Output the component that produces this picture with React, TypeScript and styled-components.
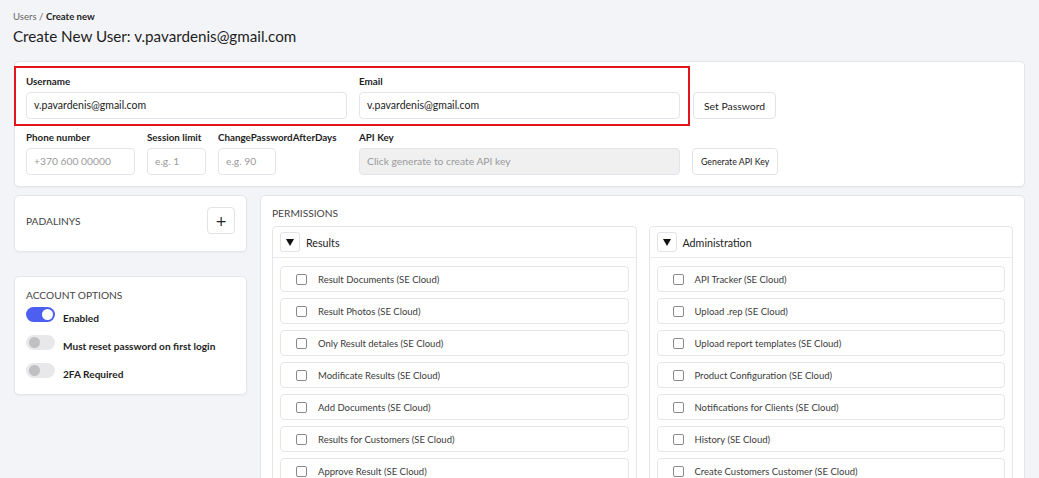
import React from "react";
import styled, { createGlobalStyle } from "styled-components";

const Global = createGlobalStyle`
  html, body { margin: 0; padding: 0; overflow: hidden; background: #f3f4f8; }
  body { font-family: Lato, "Open Sans", sans-serif; color: #222; }
  * { box-sizing: border-box; }
`;

const Page = styled.div`
  padding: 10px 14px 0 14px;
  width: 1039px;
`;

const Breadcrumb = styled.div`
  font-size: 9.6px;
  line-height: 14px;
  color: #666;
  margin-left: -1px;
  b { color: #222; font-weight: 700; }
`;

const Title = styled.h1`
  margin: 1px 0 0 -1px;
  font-size: 15.2px;
  line-height: 22px;
  font-weight: 400;
  color: #1e1e1e;
`;

const Card = styled.div`
  background: #fff;
  border: 1px solid #e4e6eb;
  border-radius: 5px;
  box-shadow: 0 1px 2px rgba(0, 0, 0, 0.04);
`;

const TopCard = styled(Card)`
  margin-top: 14px;
  padding: 4px 12px 11px 0;
`;

const Row = styled.div`
  display: flex;
  align-items: flex-end;
`;

const Highlight = styled.div`
  display: flex;
  gap: 12px;
  border: 2px solid #e3141b;
  padding: 6px 8px 5px 10px;
  margin-left: -1px;
`;

const Row2 = styled.div`
  display: flex;
  align-items: flex-end;
  gap: 12px;
  padding-left: 11px;
  margin-top: 4px;
`;

const Field = styled.div<{ $w: number }>`
  width: ${(p) => p.$w}px;
  display: flex;
  flex-direction: column;
`;

const Label = styled.label`
  font-size: 9.8px;
  font-weight: 700;
  line-height: 14px;
  color: #1e1e1e;
  white-space: nowrap;
  margin-bottom: 4px;
`;

const Input = styled.div<{ $w?: number; $placeholder?: boolean; $disabled?: boolean }>`
  width: ${(p) => (p.$w ? `${p.$w}px` : "100%")};
  height: 27px;
  border: 1px solid #e3e5ea;
  border-radius: 4px;
  background: ${(p) => (p.$disabled ? "#f0f0f1" : "#fff")};
  font-size: ${(p) => (p.$placeholder ? "10.3px" : "10.5px")};
  line-height: 25px;
  padding-left: 7px;
  color: ${(p) => (p.$placeholder ? "#9a9a9a" : "#222")};
  white-space: nowrap;
  overflow: hidden;
`;

const Button = styled.button<{ $small?: boolean }>`
  font-family: inherit;
  height: 27px;
  padding: 0 ${(p) => (p.$small ? "8px" : "10px")};
  background: #fff;
  border: 1px solid #e1e3e8;
  border-radius: 4px;
  font-size: ${(p) => (p.$small ? "8.8px" : "10.4px")};
  color: #222;
  cursor: pointer;
`;

const SetPwd = styled(Button)`
  margin-left: 3px;
  margin-bottom: 7px;
`;

const Grid = styled.div`
  display: grid;
  grid-template-columns: 233px 1fr;
  gap: 13px;
  margin-top: 8px;
  align-items: start;
`;

const Side = styled.div`
  display: flex;
  flex-direction: column;
  gap: 24px;
`;

const BranchCard = styled(Card)`
  display: flex;
  justify-content: space-between;
  align-items: center;
  padding: 11px 11px 17px 11px;
`;

const SectionTitle = styled.div`
  font-size: 10.2px;
  color: #444;
  text-transform: uppercase;
  line-height: 14px;
`;

const PlusButton = styled.button`
  width: 28px;
  height: 27px;
  background: #fff;
  border: 1px solid #e1e3e8;
  border-radius: 4px;
  font-size: 14px;
  line-height: 1;
  color: #222;
  padding: 0;
  font-family: "DejaVu Sans", sans-serif;
`;

const OptionsCard = styled(Card)`
  padding: 11px 11px 16px 11px;
`;

const OptionList = styled.div`
  display: flex;
  flex-direction: column;
  gap: 13px;
  margin-top: 5px;
`;

const Option = styled.div`
  display: flex;
  align-items: center;
  gap: 8px;
  height: 15px;
`;

const Switch = styled.div<{ $on?: boolean }>`
  width: 29px;
  height: 15px;
  border-radius: 8px;
  background: ${(p) => (p.$on ? "#4c5ff0" : "#e8e8eb")};
  position: relative;
  flex: none;
  &::after {
    content: "";
    position: absolute;
    top: 2px;
    left: ${(p) => (p.$on ? "16px" : "3px")};
    width: 11px;
    height: 11px;
    border-radius: 50%;
    background: ${(p) => (p.$on ? "#fff" : "#c0c0c3")};
  }
`;

const OptionLabel = styled.span`
  font-size: 10.1px;
  font-weight: 700;
  color: #1e1e1e;
  position: relative;
  top: 3px;
`;

const PermCard = styled(Card)`
  padding: 10px 11px 0 11px;
  height: 320px;
`;

const Groups = styled.div`
  display: grid;
  grid-template-columns: 1fr 1fr;
  gap: 12px;
  margin-top: 6px;
`;

const Group = styled.div`
  border: 1px solid #e4e6eb;
  border-radius: 4px;
`;

const GroupHeader = styled.div`
  display: flex;
  align-items: center;
  gap: 6px;
  height: 31px;
  padding: 0 7px;
  border-bottom: 1px solid #e9eaee;
`;

const Toggle = styled.button`
  width: 20px;
  height: 20px;
  background: #fff;
  border: 1px solid #e1e3e8;
  border-radius: 3px;
  display: flex;
  align-items: center;
  justify-content: center;
  padding: 0;
`;

const GroupName = styled.span`
  font-size: 10.7px;
  color: #222;
`;

const Items = styled.div`
  display: flex;
  flex-direction: column;
  gap: 6px;
  padding: 8px 7px 8px 7px;
`;

const Item = styled.div`
  display: flex;
  align-items: center;
  gap: 11px;
  height: 26px;
  border: 1px solid #e4e6eb;
  border-radius: 4px;
  padding-left: 15px;
`;

const Check = styled.span`
  width: 11px;
  height: 11px;
  border: 1px solid #8a8a8a;
  border-radius: 2px;
  flex: none;
`;

const ItemText = styled.span`
  font-size: 9.5px;
  color: #3a3a3a;
  white-space: nowrap;
`;

const Caret = () => (
  <svg width="8" height="7" viewBox="0 0 8 7">
    <path d="M0 0 H8 L4 7 Z" fill="#111" />
  </svg>
);

const results = [
  "Result Documents (SE Cloud)",
  "Result Photos (SE Cloud)",
  "Only Result detales (SE Cloud)",
  "Modificate Results (SE Cloud)",
  "Add Documents (SE Cloud)",
  "Results for Customers (SE Cloud)",
  "Approve Result (SE Cloud)",
];

const admin = [
  "API Tracker (SE Cloud)",
  "Upload .rep (SE Cloud)",
  "Upload report templates (SE Cloud)",
  "Product Configuration (SE Cloud)",
  "Notifications for Clients (SE Cloud)",
  "History (SE Cloud)",
  "Create Customers Customer (SE Cloud)",
];

const PermGroup = ({ name, items }: { name: string; items: string[] }) => (
  <Group>
    <GroupHeader>
      <Toggle>
        <Caret />
      </Toggle>
      <GroupName>{name}</GroupName>
    </GroupHeader>
    <Items>
      {items.map((t) => (
        <Item key={t}>
          <Check />
          <ItemText>{t}</ItemText>
        </Item>
      ))}
    </Items>
  </Group>
);

export default function App() {
  return (
    <Page>
      <Global />
      <Breadcrumb>
        Users / <b>Create new</b>
      </Breadcrumb>
      <Title>Create New User: v.pavardenis@gmail.com</Title>

      <TopCard>
        <Row>
          <Highlight>
            <Field $w={321}>
              <Label>Username</Label>
              <Input>v.pavardenis@gmail.com</Input>
            </Field>
            <Field $w={321}>
              <Label>Email</Label>
              <Input>v.pavardenis@gmail.com</Input>
            </Field>
          </Highlight>
          <SetPwd>Set Password</SetPwd>
        </Row>
        <Row2>
          <Field $w={109}>
            <Label>Phone number</Label>
            <Input $placeholder>+370 600 00000</Input>
          </Field>
          <Field $w={59}>
            <Label>Session limit</Label>
            <Input $placeholder>e.g. 1</Input>
          </Field>
          <Field $w={129}>
            <Label>ChangePasswordAfterDays</Label>
            <Input $placeholder $w={58}>e.g. 90</Input>
          </Field>
          <Field $w={321}>
            <Label>API Key</Label>
            <Input $placeholder $disabled>Click generate to create API key</Input>
          </Field>
          <Button $small>Generate API Key</Button>
        </Row2>
      </TopCard>

      <Grid>
        <Side>
          <BranchCard>
            <SectionTitle>Padalinys</SectionTitle>
            <PlusButton>+</PlusButton>
          </BranchCard>
          <OptionsCard>
            <SectionTitle>Account options</SectionTitle>
            <OptionList>
              <Option>
                <Switch $on />
                <OptionLabel>Enabled</OptionLabel>
              </Option>
              <Option>
                <Switch />
                <OptionLabel>Must reset password on first login</OptionLabel>
              </Option>
              <Option>
                <Switch />
                <OptionLabel>2FA Required</OptionLabel>
              </Option>
            </OptionList>
          </OptionsCard>
        </Side>
        <PermCard>
          <SectionTitle>Permissions</SectionTitle>
          <Groups>
            <PermGroup name="Results" items={results} />
            <PermGroup name="Administration" items={admin} />
          </Groups>
        </PermCard>
      </Grid>
    </Page>
  );
}
